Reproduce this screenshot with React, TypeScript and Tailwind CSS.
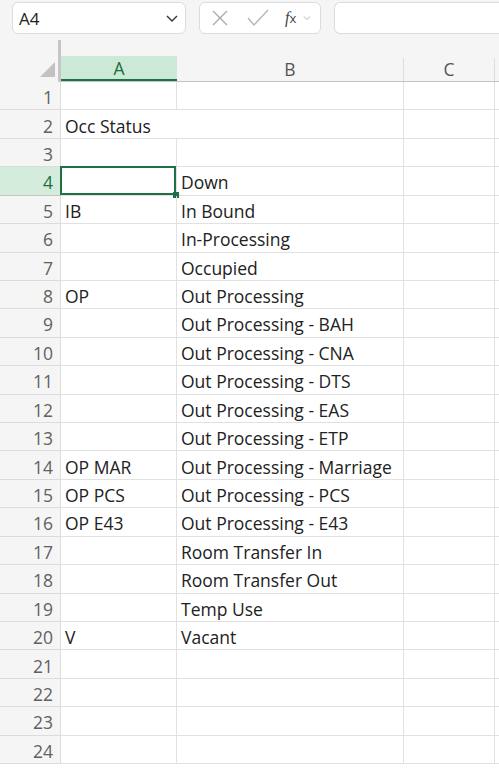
import React from 'react';

const rows: [string, string][] = [
  ['', ''],
  ['Occ Status', ''],
  ['', ''],
  ['', 'Down'],
  ['IB', 'In Bound'],
  ['', 'In-Processing'],
  ['', 'Occupied'],
  ['OP', 'Out Processing'],
  ['', 'Out Processing - BAH'],
  ['', 'Out Processing - CNA'],
  ['', 'Out Processing - DTS'],
  ['', 'Out Processing - EAS'],
  ['', 'Out Processing - ETP'],
  ['OP MAR', 'Out Processing - Marriage'],
  ['OP PCS', 'Out Processing - PCS'],
  ['OP E43', 'Out Processing - E43'],
  ['', 'Room Transfer In'],
  ['', 'Room Transfer Out'],
  ['', 'Temp Use'],
  ['V', 'Vacant'],
  ['', ''],
  ['', ''],
  ['', ''],
  ['', ''],
];

const font = { fontFamily: '"Open Sans", "Liberation Sans", sans-serif' };

export default function App() {
  return (
    <div className="h-[770px] w-[499px] overflow-hidden bg-white text-[#222]" style={font}>
      {/* Formula bar */}
      <div className="flex h-[40px] items-start gap-[13px] bg-[#f5f5f5] pl-[12px] pt-[2px]">
        <div className="flex h-[32px] w-[174px] items-center justify-between rounded-[6px] border border-[#dcdcdc] bg-white pl-[6px] pr-[6px]">
          <span className="pt-[1px] text-[17px]">A4</span>
          <svg width="14" height="14" viewBox="0 0 14 14" fill="none" stroke="#333" strokeWidth="1.4">
            <path d="M2 5l5 5 5-5" />
          </svg>
        </div>
        <div className="flex h-[32px] w-[122px] items-center rounded-[6px] border border-[#dcdcdc] bg-white pl-[10px]">
          <svg width="20" height="20" viewBox="0 0 20 20" fill="none" stroke="#a8a8a8" strokeWidth="1.3">
            <path d="M3 3l14 14M17 3L3 17" />
          </svg>
          <svg className="ml-[16px]" width="24" height="20" viewBox="0 0 24 20" fill="none" stroke="#b4b4b4" strokeWidth="1.3">
            <path d="M2 10l6 7L22 2" />
          </svg>
          <span className="ml-[15px] text-[16px] italic text-[#444]" style={{ fontFamily: '"Liberation Serif", serif' }}>
            f<span className="text-[13px] not-italic" style={font}>x</span>
          </span>
          <svg className="ml-[7px]" width="8" height="8" viewBox="0 0 8 8" fill="none" stroke="#b0b0b0" strokeWidth="1">
            <path d="M1 2.5l3 3 3-3" />
          </svg>
        </div>
        <div className="h-[32px] flex-1 rounded-l-[6px] border border-r-0 border-[#dcdcdc] bg-white" />
      </div>

      {/* Column headers */}
      <div className="flex h-[42px] bg-[#f5f5f5]">
        <div className="relative w-[58px] shrink-0">
          <svg className="absolute bottom-[5px] right-[3px]" width="15" height="15" viewBox="0 0 15 15">
            <path d="M15 0V15H0Z" fill="#c2c2c2" />
          </svg>
        </div>
        <div className="w-[3px] shrink-0 bg-[#c6c6c6]" />
        <div className="flex flex-1 flex-col">
          <div className="h-[16px]" />
          <div className="flex h-[26px] border-b border-[#c4c4c4] pt-[2px] text-[17.5px] text-[#555]">
            <div className="-mt-[2px] flex w-[116px] items-center justify-center border-b-2 border-[#1e7145] bg-[#cbe9d6] pt-[2px] text-[#1e6b3e]">
              A
            </div>
            <div className="flex w-[227px] items-center justify-center border-r border-[#dedede]">B</div>
            <div className="flex w-[91px] items-center justify-center border-r border-[#dedede]">C</div>
            <div className="flex-1" />
          </div>
        </div>
      </div>

      {/* Grid */}
      <div>
        {rows.map(([a, b], i) => {
          const n = i + 1;
          const active = n === 4;
          return (
            <div key={n} className="flex h-[28.43px]">
              <div
                className={
                  active
                    ? 'flex w-[61px] shrink-0 items-center justify-end border-r border-b border-[#c4c4c4] bg-[#d3ecdc] pr-[7px] pt-[3px] text-[17.5px] text-[#1e6b3e]'
                    : 'flex w-[61px] shrink-0 items-center justify-end border-r border-b border-[#dcdcdc] bg-[#f5f5f5] pr-[7px] pt-[3px] text-[17.5px] text-[#616161]'
                }
              >
                {n}
              </div>
              <div
                className={
                  n === 2
                    ? 'relative flex w-[116px] shrink-0 items-center border-b border-[#e1e1e1] pl-[4px] pt-[3px] text-[17.5px]'
                    : 'relative flex w-[116px] shrink-0 items-center border-r border-b border-[#e1e1e1] pl-[4px] pt-[3px] text-[17.5px]'
                }
              >
                {a && <span className="whitespace-nowrap">{a}</span>}
                {active && (
                  <>
                    <div className="absolute -left-[1px] -top-[1px] h-[calc(100%+1px)] w-[calc(100%+1px)] border-2 border-[#1e7145]" />
                    <div className="absolute -bottom-[3px] -right-[3px] h-[6px] w-[6px] bg-[#1e7145]" />
                  </>
                )}
              </div>
              <div className="flex w-[227px] shrink-0 items-center whitespace-nowrap border-b border-r border-[#e1e1e1] pl-[4px] pt-[3px] text-[17.5px]">
                {b}
              </div>
              <div className="w-[91px] shrink-0 border-r border-b border-[#e1e1e1]" />
              <div className="flex-1 border-b border-[#e1e1e1]" />
            </div>
          );
        })}
      </div>
    </div>
  );
}
